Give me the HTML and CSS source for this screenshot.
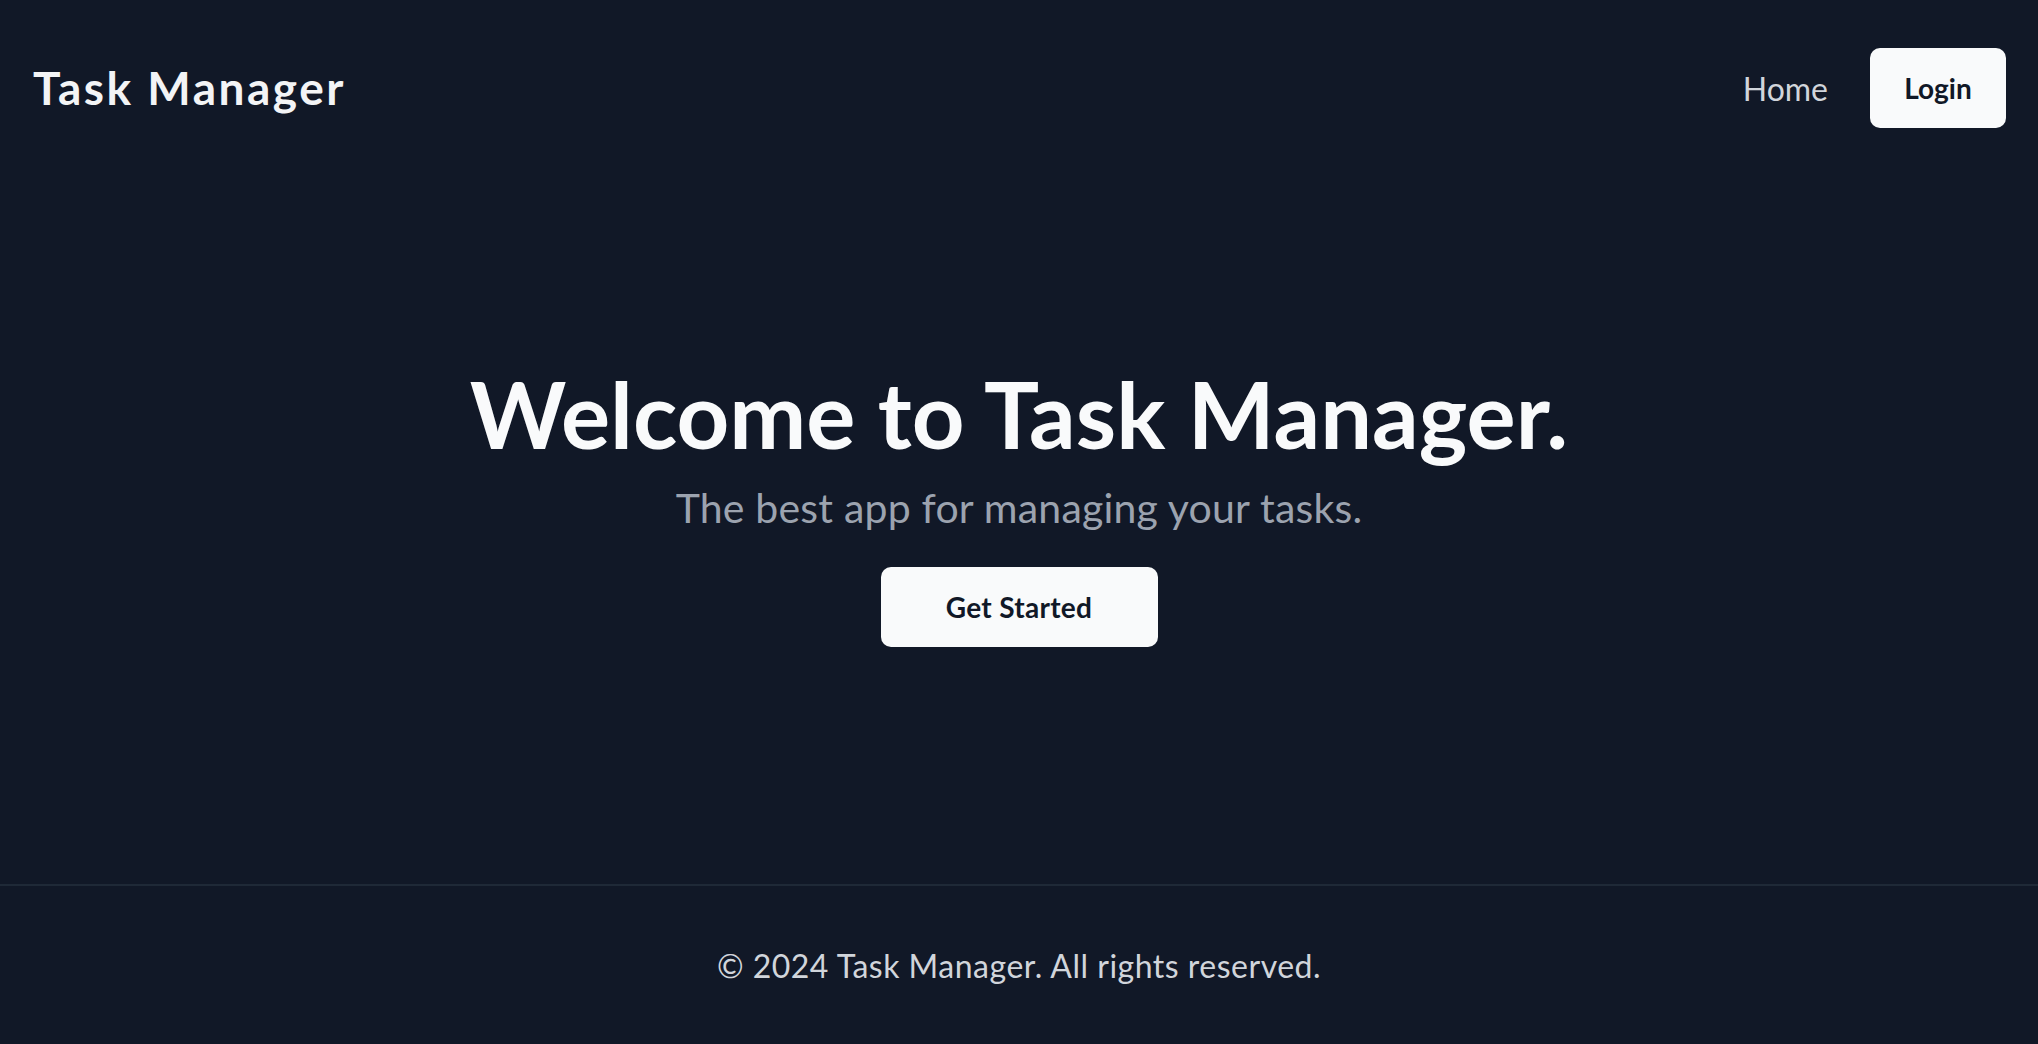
FILE: index.html
```html
<!DOCTYPE html>
<html lang="en">
<head>
<meta charset="utf-8">
<title>Task Manager</title>
<link rel="stylesheet" href="styles.css">
</head>
<body>
<div class="page">
  <header class="header">
    <div class="brand">Task Manager</div>
    <nav class="nav">
      <a class="nav-link" href="#">Home</a>
      <a class="btn btn-login" href="#">Login</a>
    </nav>
  </header>
  <main class="hero">
    <h1 class="hero-title">Welcome to Task Manager.</h1>
    <p class="hero-sub">The best app for managing your tasks.</p>
    <a class="btn btn-start" href="#">Get Started</a>
  </main>
  <footer class="footer">
    <p class="footer-text">© 2024 Task Manager. All rights reserved.</p>
  </footer>
</div>
</body>
</html>
```
FILE: styles.css
```css
* { box-sizing: border-box; }
html, body { margin: 0; padding: 0; }
body {
  background: #111827;
  font-family: Lato, "Noto Sans", sans-serif;
  color: #f9fafb;
}
.page {
  min-height: 100vh;
  display: flex;
  flex-direction: column;
}
.header {
  height: 176px;
  display: flex;
  align-items: center;
  justify-content: space-between;
  padding: 0 32px 0 33px;
}
.brand {
  font-size: 46px;
  font-weight: 700;
  color: #f3f4f6;
  line-height: 1;
  letter-spacing: 2.5px;
}
.nav {
  display: flex;
  align-items: center;
  gap: 42px;
}
.nav-link {
  color: #d1d5db;
  font-size: 32px;
  text-decoration: none;
}
.btn {
  display: inline-flex;
  align-items: center;
  justify-content: center;
  height: 80px;
  background: #f9fafb;
  color: #111827;
  border-radius: 10px;
  text-decoration: none;
  font-size: 28px;
  font-weight: 700;
}
.btn-login { width: 136px; }
.btn-start { letter-spacing: 0.3px; }
.hero {
  flex: 1;
  display: flex;
  flex-direction: column;
  align-items: center;
  justify-content: center;
  padding-bottom: 49px;
}
.hero-title {
  margin: 0;
  font-size: 92px;
  line-height: 100px;
  font-weight: 700;
  color: #f9fafb;
}
.hero-sub {
  margin: 19px 0 0;
  font-size: 41px;
  line-height: 50px;
  color: #9ca3af;
  letter-spacing: 0.2px;
}
.btn-start {
  width: 277px;
  margin-top: 34px;
}
.footer {
  height: 160px;
  border-top: 2px solid #1f2937;
  display: flex;
  align-items: center;
  justify-content: center;
}
.footer-text {
  margin: 0;
  font-size: 32px;
  letter-spacing: 0.5px;
  color: #d1d5db;
}
```
